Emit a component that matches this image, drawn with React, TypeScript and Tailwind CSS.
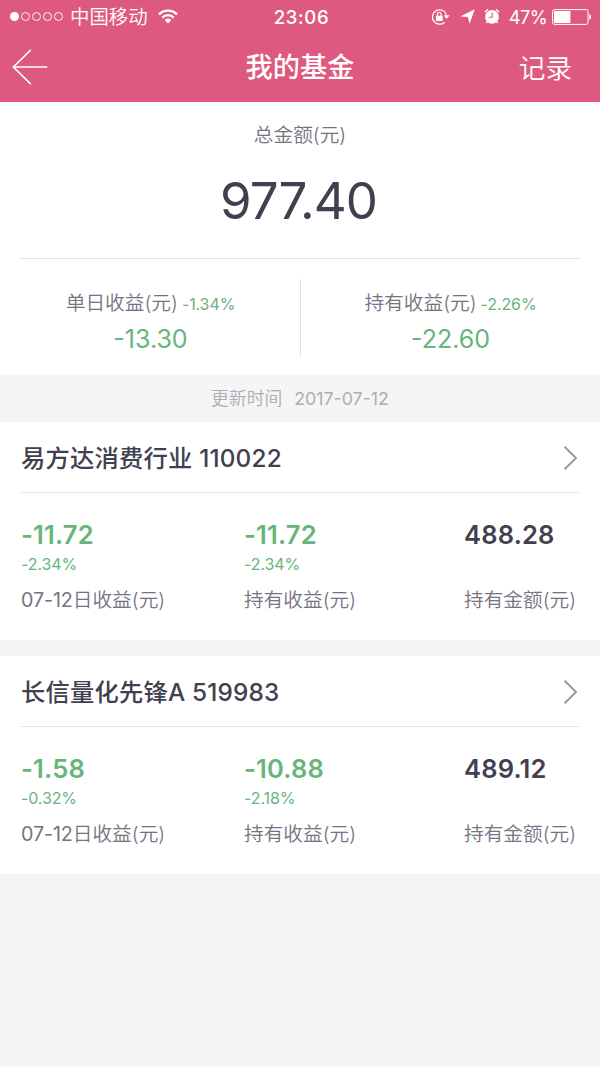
interface Metric {
  value: string
  percent?: string
  date?: string
  label: string
}

interface Fund {
  name: string
  metrics: Metric[]
}

const funds: Fund[] = [
  {
    name: '易方达消费行业 110022',
    metrics: [
      { value: '-11.72', percent: '-2.34%', date: '07-12', label: '日收益(元)' },
      { value: '-11.72', percent: '-2.34%', label: '持有收益(元)' },
      { value: '488.28', label: '持有金额(元)' },
    ],
  },
  {
    name: '长信量化先锋A 519983',
    metrics: [
      { value: '-1.58', percent: '-0.32%', date: '07-12', label: '日收益(元)' },
      { value: '-10.88', percent: '-2.18%', label: '持有收益(元)' },
      { value: '489.12', label: '持有金额(元)' },
    ],
  },
]

const totals = [
  { label: '单日收益(元)', percent: '-1.34%', value: '-13.30' },
  { label: '持有收益(元)', percent: '-2.26%', value: '-22.60' },
]

function WifiIcon() {
  return (
    <svg width="20" height="15" viewBox="0 0 20 15" fill="none" stroke="currentColor" strokeWidth="2.3">
      <path d="M1 5.4a12.8 12.8 0 0 1 18 0" />
      <path d="M4.2 8.6a8.2 8.2 0 0 1 11.6 0" />
      <path d="M10 14.4 6.6 11a4.8 4.8 0 0 1 6.8 0Z" fill="currentColor" stroke="none" />
    </svg>
  )
}

function RotationLockIcon() {
  return (
    <svg width="20" height="18" viewBox="0 0 20 18" fill="none" stroke="currentColor" strokeWidth="1.2">
      <path d="M13.6 14.2A7.2 7.2 0 1 1 15.4 6.6" />
      <path d="M12.6 7.2h6L15.6 11Z" fill="currentColor" stroke="none" />
      <rect x="4.9" y="7.8" width="6.8" height="5.2" rx="0.6" fill="currentColor" stroke="none" />
      <path d="M6.4 8.4V6.4a1.9 1.9 0 0 1 3.8 0v2" />
    </svg>
  )
}

function LocationIcon() {
  return (
    <svg width="15" height="15" viewBox="0 0 15 15" fill="currentColor">
      <path d="M14.8.2 9.6 14.8 7.9 8 .2 7.4Z" />
    </svg>
  )
}

function AlarmIcon() {
  return (
    <svg width="16" height="17" viewBox="0 0 16 17" fill="none">
      <circle cx="8" cy="8.9" r="6.9" fill="currentColor" />
      <path d="M.9 4.4A9 9 0 0 1 4.1 1.4M15.1 4.4a9 9 0 0 0-3.2-3" stroke="currentColor" strokeWidth="1.3" />
      <path d="m3.6 13.4-1.2 1.8M12.4 13.4l1.2 1.8" stroke="currentColor" strokeWidth="1.3" />
      <path d="M8.2 4.8v4.4H4.8" stroke="#de5980" strokeWidth="1.1" />
    </svg>
  )
}

function BatteryIcon() {
  return (
    <svg width="40" height="16" viewBox="0 0 40 16" fill="none">
      <rect x="0.6" y="0.6" width="35.4" height="14.8" rx="1.8" stroke="currentColor" strokeWidth="1" />
      <rect x="2" y="2" width="16.4" height="12" rx="0.6" fill="currentColor" />
      <path d="M37.2 5.2c1.2.3 1.8 1.4 1.8 2.8s-.6 2.5-1.8 2.8Z" fill="currentColor" />
    </svg>
  )
}

function StatusBar() {
  return (
    <div className="grid h-[33px] grid-cols-[1fr_auto_1fr] items-center px-[8px]">
      <div className="flex items-center pl-[2px]">
        <div className="flex gap-[2px]">
          <span className="size-[9px] rounded-full bg-white" />
          {[1, 2, 3, 4].map((dot) => (
            <span key={dot} className="size-[9px] rounded-full border border-white/90" />
          ))}
        </div>
        <span className="ml-[7px] text-[19.4px] font-[350] leading-[24px]">中国移动</span>
        <span className="ml-[10px]">
          <WifiIcon />
        </span>
      </div>
      <span className="pl-[3px] text-[18.5px] font-medium leading-[24px] tracking-[0.7px]">23:06</span>
      <div className="flex items-center justify-end">
        <RotationLockIcon />
        <span className="ml-[9px]">
          <LocationIcon />
        </span>
        <span className="ml-[9px]">
          <AlarmIcon />
        </span>
        <span className="ml-[9px] text-[18.3px] leading-[24px] tracking-[-0.6px]">47%</span>
        <span className="ml-[5px]">
          <BatteryIcon />
        </span>
      </div>
    </div>
  )
}

function NavBar() {
  return (
    <div className="grid h-[69px] grid-cols-[1fr_auto_1fr] items-center px-3">
      <svg
        className="-mt-[2px]"
        width="36"
        height="36"
        viewBox="0 0 36 36"
        fill="none"
        stroke="currentColor"
        strokeWidth="1.6"
        strokeLinecap="round"
      >
        <path d="M18.3 1.4 1.4 18l16.9 16.6M1.4 18h33.4" />
      </svg>
      <h1 className="text-[27.2px] font-medium leading-[36px]">我的基金</h1>
      <span className="pr-4 text-right text-[26.6px] font-[350] leading-[36px]">记录</span>
    </div>
  )
}

function Summary() {
  return (
    <section className="h-[273px] bg-white">
      <div className="mx-[19px] flex h-[157px] flex-col items-center border-b border-[#e2e2e4] pt-[20px]">
        <span className="text-[19.7px] font-[350] leading-[26px] text-[#75737f]">总金额(元)</span>
        <span className="mt-[22px] pr-[3px] text-[51px] leading-[62px] tracking-[-1px] text-[#424050]">977.40</span>
      </div>
      <div className="mt-[20px] grid h-[78px] grid-cols-2">
        {totals.map((total) => (
          <div
            key={total.label}
            className="flex flex-col items-center border-l border-[#e2e2e4] pt-[10px] first:border-transparent"
          >
            <div className="flex items-baseline gap-[4px] leading-[28px]">
              <span className="text-[19.7px] font-[350] text-[#75737f]">{total.label}</span>
              <span className="text-[16px] tracking-[-0.1px] text-[#67b47c]">{total.percent}</span>
            </div>
            <span className="mt-[5px] text-[25px] leading-[32px] text-[#67b47c]">{total.value}</span>
          </div>
        ))}
      </div>
    </section>
  )
}

function FundCard({ fund }: { fund: Fund }) {
  return (
    <section className="h-[218px] bg-white px-[21px]">
      <div className="flex h-[71px] items-center justify-between border-b border-[#e2e2e4] pt-[2px]">
        <h2 className="text-[24.3px] font-medium leading-[32px] tracking-[0.2px] text-[#424050]">{fund.name}</h2>
        <svg width="16" height="26" viewBox="0 0 16 26" fill="none" stroke="#98989c" strokeWidth="1.9">
          <path d="M1.6 1.8 13 13 1.6 24.2" />
        </svg>
      </div>
      <div className="grid grid-cols-[223px_220px_1fr] pt-[26px]">
        {fund.metrics.map((metric) => (
          <div key={metric.label} className="whitespace-nowrap">
            <div
              className={`text-[25.5px] font-[560] leading-[32px] tracking-[0.2px] ${metric.percent ? 'text-[#67b47c]' : 'text-[#424050]'}`}
            >
              {metric.value}
            </div>
            <div className="h-[26px] text-[16px] leading-[26px] tracking-[-0.1px] text-[#67b47c]">{metric.percent}</div>
            <div className="mt-[9px] text-[19.7px] font-[350] leading-[28px] text-[#75737f]">
              {metric.date && <span className="font-normal tracking-[-0.1px]">{metric.date}</span>}
              {metric.label}
            </div>
          </div>
        ))}
      </div>
    </section>
  )
}

export default function App() {
  return (
    <div className="min-h-screen bg-[#f5f5f5] font-['Inter','Noto_Sans_CJK_SC',sans-serif]">
      <header className="h-[102px] bg-[#de5980] text-white">
        <StatusBar />
        <NavBar />
      </header>
      <Summary />
      <div className="flex h-[47px] items-center justify-center gap-[12px] pt-[2px] text-[17.8px] font-[350] text-[#aeacb8]">
        <span>更新时间</span>
        <span className="font-normal">2017-07-12</span>
      </div>
      <div className="flex flex-col gap-4">
        {funds.map((fund) => (
          <FundCard key={fund.name} fund={fund} />
        ))}
      </div>
    </div>
  )
}
